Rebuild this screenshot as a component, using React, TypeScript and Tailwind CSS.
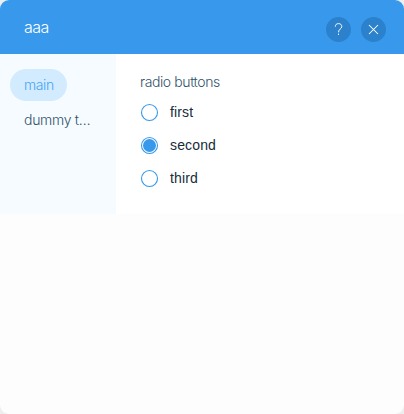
import { useState } from "react";

const options = ["first", "second", "third"];

function Radio({ label, checked, onSelect }: { label: string; checked: boolean; onSelect: () => void }) {
  return (
    <button type="button" role="radio" aria-checked={checked} onClick={onSelect} className="flex h-[33px] items-center">
      <svg width="19" height="19" viewBox="0 0 19 19" className="shrink-0">
        <circle cx="9.5" cy="9.5" r="8" fill="white" stroke="#3899ec" strokeWidth="1.1" />
        {checked && <circle cx="9.5" cy="9.5" r="6.5" fill="#3899ec" />}
      </svg>
      <span className="mb-[2px] ml-[11px] text-[14px] leading-[20px] tracking-[0.15px] text-[#162d3d]">{label}</span>
    </button>
  );
}

export default function App() {
  const [selected, setSelected] = useState("second");
  return (
    <div className="h-[414px] w-[404px] bg-[#eeeeee] font-['Liberation_Sans',Arial,sans-serif]">
      <div className="flex h-full flex-col overflow-hidden rounded-[9px] bg-[#fdfdfd]">
        <header className="flex h-[54px] items-center bg-[#3899ec] pr-[18px] pl-6 pt-1 text-white">
          <h1 className="mb-1 flex-1 font-['Inter',sans-serif] text-[16px] leading-6 font-light tracking-[-0.6px]">aaa</h1>
          <div className="flex gap-[10px]">
            <button aria-label="Help" className="flex size-[25px] items-center justify-center rounded-full bg-[#2b81cb]">
              <svg width="25" height="25" viewBox="0 0 25 25" fill="none" stroke="white" strokeWidth="1">
                <path d="M9.3 9.7C9.3 7.7 10.6 6.6 12.5 6.6S15.8 7.7 15.8 9.5C15.8 12 12.5 12 12.5 15.3" />
                <path d="M12.5 16.7V18" />
              </svg>
            </button>
            <button aria-label="Close" className="flex size-[25px] items-center justify-center rounded-full bg-[#2b81cb]">
              <svg width="25" height="25" viewBox="0 0 25 25" fill="none" stroke="white" strokeWidth="1.05">
                <path d="M8 8L17 17M17 8L8 17" />
              </svg>
            </button>
          </div>
        </header>
        <div className="flex h-40 bg-white">
          <nav className="w-[116px] bg-[#f5fbff] px-[10px] pt-[15px] font-['Inter',sans-serif] text-[14px] font-light">
            <div className="flex h-8 w-[57px] items-center rounded-full bg-[#d3ebff] pb-[2px] pl-[14px] tracking-[-0.4px] text-[#45a5f2]">main</div>
            <div className="mt-[3px] flex h-8 items-center pb-[2px] pl-[14px] tracking-[-0.3px] whitespace-nowrap text-[#32536a]">dummy t…</div>
          </nav>
          <section className="pt-[18px] pl-6">
            <h2 className="h-[24px] font-['Inter',sans-serif] text-[14px] leading-[20px] font-light tracking-[-0.4px] text-[#32536a]">radio buttons</h2>
            <div role="radiogroup">
              {options.map((o) => (
                <Radio key={o} label={o} checked={selected === o} onSelect={() => setSelected(o)} />
              ))}
            </div>
          </section>
        </div>
      </div>
    </div>
  );
}
